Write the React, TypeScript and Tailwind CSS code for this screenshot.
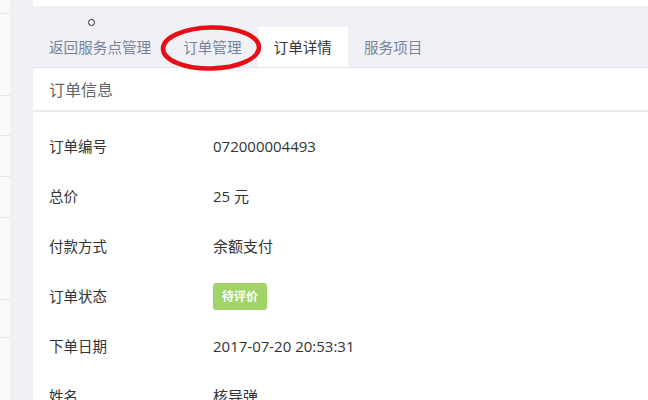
import React from "react";

const rows: { label: string; value: string; badge?: boolean }[] = [
  { label: "订单编号", value: "072000004493" },
  { label: "总价", value: "25 元" },
  { label: "付款方式", value: "余额支付" },
  { label: "订单状态", value: "待评价", badge: true },
  { label: "下单日期", value: "2017-07-20 20:53:31" },
  { label: "姓名", value: "核导弹" },
];

export default function App() {
  const font = { fontFamily: '"Microsoft YaHei", "Noto Sans CJK SC", "Noto Sans", sans-serif' };
  const valueFont = { fontFamily: '"Open Sans", "Noto Sans CJK SC", sans-serif' };
  return (
    <div className="w-[648px] h-[400px] flex overflow-hidden bg-[#eff1f6]" style={font}>
      <div className="w-[10px] shrink-0 flex flex-col bg-[#fafafa]">
        <div className="h-[14px] shrink-0 border-b border-[#e6e6e6]" />
        <div className="h-[82px] shrink-0 border-b border-[#e6e6e6]" />
        <div className="h-[40px] shrink-0 border-b border-[#e6e6e6]" />
        <div className="h-[41px] shrink-0 border-b border-[#e6e6e6]" />
        <div className="h-[41px] shrink-0 border-b border-[#e6e6e6]" />
        <div className="h-[82px] shrink-0 border-b border-[#e6e6e6]" />
        <div className="h-[38px] shrink-0 border-b border-[#e6e6e6]" />
      </div>
      <div className="flex-1 ml-[23px] flex flex-col min-h-0">
        <div className="h-[6px] shrink-0 bg-white" />
        <div className="relative h-[62px] shrink-0 flex flex-col justify-end border-b border-[#e3e5ea]">
          <div className="absolute left-[55px] top-[13px] w-[7px] h-[7px] rounded-full border border-[#222] bg-white" />
          <div className="flex h-[40px] text-[14.6px]">
            <div className="px-4 flex items-center text-[#78839a]">返回服务点管理</div>
            <div className="px-4 flex items-center text-[#78839a]">订单管理</div>
            <div className="px-4 flex items-center bg-white text-[#333]">订单详情</div>
            <div className="px-4 flex items-center text-[#78839a]">服务项目</div>
          </div>
          <svg className="absolute left-[126px] top-[18px]" width="106" height="52" viewBox="0 0 106 52">
            <ellipse cx="52" cy="24" rx="48" ry="20.5" fill="none" stroke="#e60f17" strokeWidth="4.5" transform="rotate(-1 52 24)" />
          </svg>
        </div>
        <div className="bg-white shrink-0 flex flex-col">
          <div className="h-[44px] shrink-0 flex items-center px-4 text-[16px] text-[#666] border-b-2 border-[#e9eaee]">订单信息</div>
          <div className="pt-[9px] flex flex-col">
            {rows.map((r) => (
              <div key={r.label} className="h-[50px] shrink-0 flex items-center px-4 text-[14.5px] text-[#333]">
                <div className="w-[164px]">{r.label}</div>
                {r.badge ? (
                  <span className="bg-[#a0d468] text-white text-[12px] font-bold rounded-[3px] px-[9px] h-[27px] flex items-center">{r.value}</span>
                ) : (
                  <div className="text-[15px]" style={valueFont}>{r.value}</div>
                )}
              </div>
            ))}
          </div>
        </div>
      </div>
    </div>
  );
}
